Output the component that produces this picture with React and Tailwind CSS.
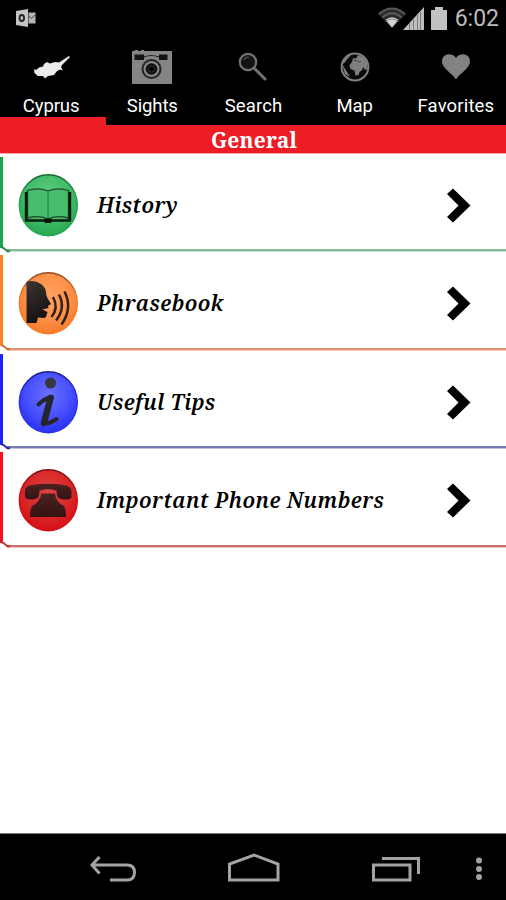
import React from "react";

const SERIF = "font-['Droid_Serif','Noto_Serif','DejaVu_Serif_Condensed','DejaVu_Serif',serif]";

function OutlookIcon() {
  return (
    <svg width="20" height="18" viewBox="0 0 20 18">
      <path d="M0 2L12 0V18L0 16Z" fill="#c4c4c4" />
      <path d="M12.500 3.500H19.500V14.500H12.500Z" fill="#b5b5b5" />
      <path d="M12.500 7L15.500 9.500L19.500 5.500" fill="none" stroke="#444" strokeWidth="1" />
      <ellipse cx="5.800" cy="9" rx="2.300" ry="3" fill="none" stroke="#222" strokeWidth="1.800" />
    </svg>
  );
}

function WifiIcon() {
  return (
    <svg width="28" height="22" viewBox="0 0 28 22">
      <path d="M0 7Q14 -5 28 7L14 21Z" fill="#2b2b2b" />
      <g fill="none" stroke="#5a5a5a" strokeWidth="2">
        <path d="M1 7Q14 -4 27 7" />
        <path d="M4.500 10.500Q14 2 23.500 10.500" />
      </g>
      <path d="M7.500 13Q14 7.500 20.500 13L14 20.500Z" fill="#d4d4d4" />
      <path d="M8 14.200Q14 10 20 14.200" fill="none" stroke="#777" strokeWidth="0.800" />
    </svg>
  );
}

function SignalIcon() {
  return (
    <svg width="21" height="23" viewBox="0 0 21 23">
      <path d="M0 23L21 0V23Z" fill="#bdbdbd" />
      <path d="M6.500 16V23M10.500 12V23M14.500 8V23M17.500 5V23" stroke="#7c7c7c" strokeWidth="1" />
    </svg>
  );
}

function BatteryIcon() {
  return (
    <svg width="16" height="23" viewBox="0 0 16 23">
      <path d="M0 3H4V0H12V3H16V23H0Z" fill="#c2c2c2" />
    </svg>
  );
}

function CyprusIcon() {
  return (
    <svg width="38" height="26" viewBox="0 0 38 26">
      <path
        d="M1 14L3 15L6 12.500L10 11.500L11 9L14 7L17 8.500L22 7L26 7.500L36 1L37 2L29 10L28 12L30 15.500L27.500 14.500L24 16L21 20L15 21L12 23.500L10 21L5 21L1.500 18Z"
        fill="#ececec"
      />
    </svg>
  );
}

function CameraIcon() {
  return (
    <svg width="40" height="34" viewBox="0 0 40 34">
      <path d="M0 1H3V0H6V1H9V0H12V1H40V34H0Z" fill="#858585" />
      <path d="M2.500 4.500H12V10H2.500ZM27 4.500H35.500V10H27Z" fill="#141414" />
      <path d="M12 7Q19 4 27 7" fill="none" stroke="#222" strokeWidth="1.200" />
      <circle cx="19.500" cy="19" r="10" fill="#222" />
      <circle cx="19.500" cy="19" r="8" fill="#858585" />
      <circle cx="19.500" cy="19" r="5.800" fill="#111" />
      <circle cx="19.500" cy="19" r="3" fill="#000" stroke="#333" strokeWidth="1" />
    </svg>
  );
}

function SearchIcon() {
  return (
    <svg width="30" height="30" viewBox="0 0 30 30">
      <circle cx="10" cy="10" r="8.200" fill="#131313" stroke="#737373" strokeWidth="2.200" />
      <path d="M6 8A5 5 0 0 1 11 5" fill="none" stroke="#444" strokeWidth="1.500" />
      <path d="M16 16L27 27" stroke="#737373" strokeWidth="3" strokeLinecap="round" />
    </svg>
  );
}

function GlobeIcon() {
  return (
    <svg width="30" height="30" viewBox="0 0 30 30">
      <circle cx="15" cy="15" r="13.400" fill="#0a0a0a" stroke="#808080" strokeWidth="2" />
      <path
        d="M13 6L16 6.500L18 3L23 5L27 10L27.500 17L25 18L23.500 15L22 18L19.500 20L18.500 23L15.500 23.500L14.500 18.500L10.500 17L9.500 13L12 10Z"
        fill="#7f7f7f"
      />
      <path d="M14 8.500H17L18.500 10L21 9.500" stroke="#444" strokeWidth="1" fill="none" />
      <path d="M2 12L4.500 16L7 20L10 25L5 22Z" fill="#808080" />
      <path d="M3 9L8 4L11 3L7 7.500L3.500 12Z" fill="#808080" />
    </svg>
  );
}

function HeartIcon() {
  return (
    <svg width="28" height="26" viewBox="0 0 28 26">
      <path
        d="M14 25.500C11 20 0 14.500 0 7.500C0 -0.500 10.500 -2 14 4C17.500 -2 28 -0.500 28 7.500C28 14.500 17 20 14 25.500Z"
        fill="#828282"
      />
    </svg>
  );
}

const TABS = [
  { label: "Cyprus", icon: <CyprusIcon />, offset: "pt-[2px] pl-[3px]", tracking: "tracking-[-0.1px]" },
  { label: "Sights", icon: <CameraIcon />, offset: "pl-px", tracking: "tracking-[-0.1px]" },
  { label: "Search", icon: <SearchIcon />, offset: "pl-px", tracking: "tracking-[0.15px]" },
  { label: "Map", icon: <GlobeIcon />, offset: "pl-px", tracking: "tracking-[-0.1px]" },
  { label: "Favorites", icon: <HeartIcon />, offset: "pl-[2px] pb-px", tracking: "tracking-[0.15px]" },
];

function BookGlyph() {
  return (
    <g strokeLinejoin="round">
      <path d="M8 19V47.500H52V19" fill="none" stroke="#0b1d10" strokeWidth="2.400" />
      <path
        d="M9.500 17.500Q20 14 30 18Q40 14 50.500 17.500V45Q39 42 30 46Q21 42 9.500 45Z"
        fill="#48bd6c"
        stroke="#1d4a2a"
        strokeWidth="1.300"
      />
      <path d="M30 18V45" stroke="#2c8548" strokeWidth="1.200" />
      <path d="M8.500 20V46M51.500 20V46" stroke="#0b1d10" strokeWidth="2.400" />
      <path d="M26.500 45.500H33.500V50H26.500Z" fill="#08150b" />
    </g>
  );
}

function SpeakGlyph() {
  return (
    <g>
      <path
        d="M8.500 11Q13 9 19 11Q27 14 28 21Q28 25 30 28L33 33L30 35L30.500 37L24.500 38.500L29.500 41L28 46Q27 47.500 20 46.500L18.500 52H8.500Z"
        fill="url(#ink)"
      />
      <g fill="none" stroke="#30211a" strokeWidth="2.500">
        <path d="M35 26Q41 37 33.500 46" />
        <path d="M41 23.500Q48 37 38 49.500" />
        <path d="M46.500 20.500Q55 37 43.500 53.500" />
      </g>
    </g>
  );
}

function InfoGlyph() {
  return (
    <g>
      <circle cx="32.500" cy="13" r="5.500" fill="#37373f" />
      <path
        d="M20.500 34.500Q26 28.500 34 27Q30 40 26.500 51Q27 56.500 38.500 49"
        fill="none"
        stroke="#25252d"
        strokeWidth="4"
        strokeLinecap="round"
        strokeLinejoin="round"
      />
      <path d="M32.500 28L26 53" stroke="#25252d" strokeWidth="6.500" strokeLinecap="round" />
    </g>
  );
}

function PhoneGlyph() {
  return (
    <g fill="url(#ink-red)">
      <path d="M7 23Q7 18 14 17Q30 14.500 46 17Q53 18 53.500 23L53.500 29Q53 32 46 31.500Q40 31 39 28L38.500 22.500Q30 19.500 21.500 22.500L21 28Q20 31 14 31.500Q7 32 7 28Z" />
      <path d="M23.500 25.500H37Q37.500 34 46 38Q48 41 48 49H12Q12 41 14 38Q22 34 23.500 25.500Z" />
    </g>
  );
}

function Badge({ id, light, mid, dark, rim, children }) {
  return (
    <svg width="60" height="64" viewBox="0 0 60 64" className="shrink-0">
      <defs>
        <radialGradient id={id} cx="50%" cy="38%" r="62%">
          <stop offset="0" stopColor={light} />
          <stop offset="0.6" stopColor={mid} />
          <stop offset="1" stopColor={dark} />
        </radialGradient>
        <linearGradient id={`${id}-rim`} x1="0" y1="0" x2="0" y2="1">
          <stop offset="0" stopColor={rim} />
          <stop offset="0.45" stopColor={dark} />
        </linearGradient>
        <linearGradient id="ink" x1="0" y1="0" x2="0.3" y2="1">
          <stop offset="0" stopColor="#3a3432" />
          <stop offset="1" stopColor="#171212" />
        </linearGradient>
        <linearGradient id="ink-red" x1="0" y1="0" x2="0" y2="1">
          <stop offset="0" stopColor="#4a2222" />
          <stop offset="1" stopColor="#351313" />
        </linearGradient>
      </defs>
      <ellipse cx="30.300" cy="32.300" rx="29" ry="30.500" fill={`url(#${id})`} stroke={`url(#${id}-rim)`} strokeWidth="1.400" />
      {children}
    </svg>
  );
}

const ITEMS = [
  {
    title: "History",
    height: "h-[98px]",
    bar: "bg-[#18a54c]",
    line: "bg-[#83b797] border-[#c4dfce]",
    corner: "#23864a",
    badge: { id: "green", light: "#60cf83", mid: "#43bd69", dark: "#27a751", rim: "#1d6838" },
    glyph: <BookGlyph />,
    tracking: "tracking-[0.4px]",
  },
  {
    title: "Phrasebook",
    height: "h-[99px]",
    bar: "bg-[#ff7f27]",
    line: "bg-[#dd9472] border-[#f6cdb8]",
    corner: "#ce6e2a",
    badge: { id: "orange", light: "#ffa263", mid: "#ff9149", dark: "#f57c2b", rim: "#944c20" },
    glyph: <SpeakGlyph />,
    tracking: "tracking-[0.45px]",
  },
  {
    title: "Useful Tips",
    height: "h-[98px]",
    bar: "bg-[#1c25f5]",
    line: "bg-[#7a7ab8] border-[#c0c0e6]",
    corner: "#2b2ba6",
    badge: { id: "blue", light: "#6970ff", mid: "#4850ff", dark: "#2831ef", rim: "#1b2187" },
    glyph: <InfoGlyph />,
    tracking: "tracking-[0.4px]",
  },
  {
    title: "Important Phone Numbers",
    height: "h-[99px]",
    bar: "bg-[#f50f20]",
    line: "bg-[#c87070] border-[#f0bfbf]",
    corner: "#cc2b36",
    badge: { id: "red", light: "#de4444", mid: "#d92828", dark: "#d50f16", rim: "#7d1111" },
    glyph: <PhoneGlyph />,
    tracking: "tracking-[0.45px]",
  },
];

function Row({ item }) {
  return (
    <li className={`relative flex flex-col pt-[3px] ${item.height}`}>
      <div className="flex h-[93px]">
        <div className={`h-[91px] w-[3px] ${item.bar}`} />
        <div className="ml-[15px] flex flex-1 items-center pt-[3px]">
          <Badge {...item.badge}>{item.glyph}</Badge>
          <span
            className={`ml-[19px] flex-1 text-[21px] leading-7 font-semibold whitespace-nowrap text-black italic ${SERIF} ${item.tracking}`}
          >
            {item.title}
          </span>
          <svg width="24" height="36" viewBox="0 0 24 36" className="mr-[35px] shrink-0">
            <path d="M0 7L6 1.500L23.500 18.500L6 35.500L0 30L11.500 18.500Z" fill="#000" />
          </svg>
        </div>
      </div>
      <div className={`ml-[7px] h-[3px] shrink-0 border-b ${item.line}`} />
      <svg width="10" height="8" viewBox="0 0 10 8" className="absolute top-[91px] left-0">
        <path d="M1.500 2L3.500 3L7.500 6.200H10" fill="none" stroke={item.corner} strokeWidth="2" />
      </svg>
    </li>
  );
}

export default function App() {
  return (
    <div className="flex h-[900px] w-[506px] flex-col overflow-hidden bg-white">
      <header className="bg-black">
        <div className="flex h-[37px] items-center pr-[7px] pb-px pl-4">
          <OutlookIcon />
          <div className="ml-auto flex items-center">
            <WifiIcon />
            <div className="-ml-[3px]">
              <SignalIcon />
            </div>
            <div className="ml-[7px]">
              <BatteryIcon />
            </div>
            <span className="ml-[8px] pt-px font-['Roboto',sans-serif] text-[23px] leading-9 text-[#bcbcbc]">6:02</span>
          </div>
        </div>
        <nav className="relative grid h-[88px] grid-cols-5">
          {TABS.map((tab) => (
            <div key={tab.label} className="flex flex-col items-center">
              <div className={`flex h-[60px] items-center justify-center ${tab.offset}`}>{tab.icon}</div>
              <span
                className={`-mt-[3px] pl-px font-['Roboto',sans-serif] text-[18.5px] leading-6 text-white ${tab.tracking}`}
              >
                {tab.label}
              </span>
            </div>
          ))}
          <div className="absolute bottom-0 left-0 h-[8px] w-[106px] bg-[#ee1c25]" />
        </nav>
      </header>

      <h1
        className={`h-[29px] border-b border-[#f9a5a8] bg-[#ee1c25] pl-[2px] text-center text-[21px] leading-[31px] font-bold tracking-[0.2px] text-white ${SERIF}`}
      >
        General
      </h1>

      <ul className="flex-1">
        {ITEMS.map((item) => (
          <Row key={item.title} item={item} />
        ))}
      </ul>

      <footer className="flex h-[67px] items-center border-t border-[#777] bg-black">
        <svg width="506" height="66" viewBox="0 0 506 66" fill="none" stroke="#a3a3a3" strokeWidth="3">
          <path d="M92 31H127Q134.500 31 134.500 38.500Q134.500 46 127 46H110" />
          <path d="M99.500 23L92 31L99.500 39.500" />
          <path d="M229.500 46V30L254 21L278 30V46Z" />
          <path d="M373.500 31H410V46H373.500Z" />
          <path d="M382 24.500H418.500V40" />
          <g fill="#a3a3a3" stroke="none">
            <circle cx="479" cy="26.500" r="3" />
            <circle cx="479" cy="35" r="3" />
            <circle cx="479" cy="43" r="3" />
          </g>
        </svg>
      </footer>
    </div>
  );
}
